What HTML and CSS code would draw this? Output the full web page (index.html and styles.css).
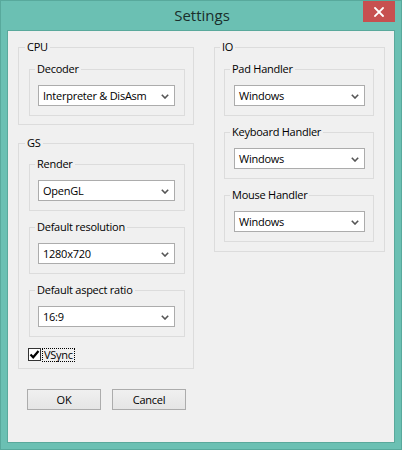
FILE: index.html
```html
<!DOCTYPE html>
<html>
<head>
<meta charset="utf-8">
<link rel="stylesheet" href="styles.css">
</head>
<body>
<div class="window">
  <div class="titlebar">
    <span class="title">Settings</span>
    <span class="close" aria-label="Close">
      <svg width="10" height="10" viewBox="0 0 10 10"><path d="M1 1L9 9M9 1L1 9" stroke="#fff" stroke-width="1.8" stroke-linecap="square"/></svg>
    </span>
  </div>
  <div class="client">
    <div class="columns">
      <div class="col col-left">
        <fieldset class="group outer">
          <legend>CPU</legend>
          <fieldset class="group inner">
            <legend>Decoder</legend>
            <div class="select"><span>Interpreter &amp; DisAsm</span><svg class="chev" width="8" height="5" viewBox="0 0 8 5"><path d="M0.8 0.8L4 4L7.2 0.8" fill="none" stroke="#555" stroke-width="1.6"/></svg></div>
          </fieldset>
        </fieldset>
        <fieldset class="group outer gs">
          <legend>GS</legend>
          <fieldset class="group inner">
            <legend>Render</legend>
            <div class="select"><span>OpenGL</span><svg class="chev" width="8" height="5" viewBox="0 0 8 5"><path d="M0.8 0.8L4 4L7.2 0.8" fill="none" stroke="#555" stroke-width="1.6"/></svg></div>
          </fieldset>
          <fieldset class="group inner">
            <legend>Default resolution</legend>
            <div class="select"><span>1280x720</span><svg class="chev" width="8" height="5" viewBox="0 0 8 5"><path d="M0.8 0.8L4 4L7.2 0.8" fill="none" stroke="#555" stroke-width="1.6"/></svg></div>
          </fieldset>
          <fieldset class="group inner">
            <legend>Default aspect ratio</legend>
            <div class="select"><span>16:9</span><svg class="chev" width="8" height="5" viewBox="0 0 8 5"><path d="M0.8 0.8L4 4L7.2 0.8" fill="none" stroke="#555" stroke-width="1.6"/></svg></div>
          </fieldset>
          <div class="check">
            <span class="box"><svg width="11" height="11" viewBox="0 0 11 11"><path d="M1.5 5.5L4.2 8.3L9.5 2" fill="none" stroke="#000" stroke-width="2.2"/></svg></span>
            <span class="check-label">VSync</span>
          </div>
        </fieldset>
      </div>
      <div class="col col-right">
        <fieldset class="group outer io">
          <legend>IO</legend>
          <fieldset class="group inner">
            <legend>Pad Handler</legend>
            <div class="select"><span>Windows</span><svg class="chev" width="8" height="5" viewBox="0 0 8 5"><path d="M0.8 0.8L4 4L7.2 0.8" fill="none" stroke="#555" stroke-width="1.6"/></svg></div>
          </fieldset>
          <fieldset class="group inner">
            <legend>Keyboard Handler</legend>
            <div class="select"><span>Windows</span><svg class="chev" width="8" height="5" viewBox="0 0 8 5"><path d="M0.8 0.8L4 4L7.2 0.8" fill="none" stroke="#555" stroke-width="1.6"/></svg></div>
          </fieldset>
          <fieldset class="group inner">
            <legend>Mouse Handler</legend>
            <div class="select"><span>Windows</span><svg class="chev" width="8" height="5" viewBox="0 0 8 5"><path d="M0.8 0.8L4 4L7.2 0.8" fill="none" stroke="#555" stroke-width="1.6"/></svg></div>
          </fieldset>
        </fieldset>
      </div>
    </div>
    <div class="buttons">
      <button class="btn">OK</button>
      <button class="btn">Cancel</button>
    </div>
  </div>
</div>
</body>
</html>
```
FILE: styles.css
```css
* { box-sizing: border-box; }
html, body { margin: 0; padding: 0; background: #6bc0b3; }
.window {
  width: 402px;
  height: 450px;
  background: #6bc0b3;
  border: 1px solid #58a99c;
  display: flex;
  flex-direction: column;
  position: relative;
  font-family: "Open Sans", "Noto Sans", sans-serif;
  font-size: 11px;
  letter-spacing: -0.25px;
  color: #000;
}
.titlebar {
  height: 29px;
  flex: none;
  text-align: center;
  font-size: 15px;
  letter-spacing: 0;
  line-height: 29px;
  color: #1a2e2b;
}
.title { display: inline-block; padding-left: 2px; }
.close {
  position: absolute;
  top: 0;
  right: 6px;
  width: 32px;
  height: 21px;
  background: #c75050;
  display: flex;
  align-items: center;
  justify-content: center;
}
.client {
  margin: 0 6px 6px;
  flex: 1;
  background: #f0f0f0;
  border: 1px solid #5aa99c;
  padding: 9px 0 0 10px;
}
.columns {
  display: flex;
  gap: 20px;
  align-items: flex-start;
}
.col { display: flex; flex-direction: column; }
.col-left { width: 176px; }
.col-right { width: 171px; }
.group {
  margin: 0;
  border: 1px solid #dcdcdc;
  min-width: 0;
}
.group > legend {
  font-size: 11px;
  line-height: 14px;
  height: 14px;
  padding: 0 2px;
  margin-left: -4px;
}
.outer { padding: 8px 8px 8px 10px; }
.outer > legend { margin-left: -4px; }
.outer.gs { padding-top: 7px; padding-bottom: 7px; margin-top: 11px; }
.outer.io { padding: 8px 10px 9px 9px; }
.outer.io > legend { margin-left: -4px; }
.inner { padding: 9px 9px 9px 8px; }
.inner > legend { margin-left: -3px; }
.inner + .inner { margin-top: 9px; }
.io .inner { padding: 9px 8px 9px 9px; }
.io .inner > legend { margin-left: -4px; }
.select {
  height: 21px;
  background: #fff;
  border: 1px solid #acacac;
  display: flex;
  align-items: center;
  justify-content: space-between;
  padding: 0 5px 0 4px;
  line-height: 19px;
}
.chev { flex: none; margin-top: 1px; }
.check {
  margin-top: 11px;
  margin-left: -1px;
  display: flex;
  align-items: center;
  height: 13px;
}
.box {
  width: 13px;
  height: 13px;
  border: 1px solid #333;
  background: #fff;
  display: flex;
  align-items: center;
  justify-content: center;
}
.check-label {
  margin-left: 1px;
  border: 1px dotted #000;
  height: 14px;
  line-height: 12px;
  padding: 0 1px;
}
.buttons {
  display: flex;
  gap: 11px;
  margin-top: 20px;
  padding-left: 9px;
}
.btn {
  width: 74px;
  height: 21px;
  border: 1px solid #acacac;
  background: linear-gradient(#f0f0f0, #e5e5e5);
  font-family: inherit;
  font-size: 11px;
  letter-spacing: -0.25px;
  color: #000;
  padding: 0;
  margin: 0;
}
```
